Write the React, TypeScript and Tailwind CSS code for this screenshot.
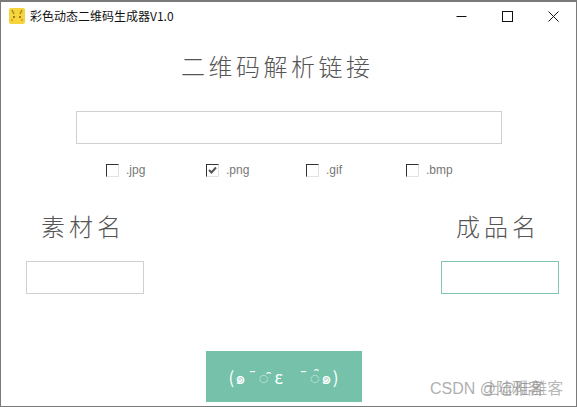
const cjk = { fontFamily: '"Noto Sans CJK SC", sans-serif' };
const mark = { fontFamily: '"Liberation Sans", "Noto Sans CJK SC", sans-serif' };

const formats = [
  { label: '.jpg', checked: false },
  { label: '.png', checked: true },
  { label: '.gif', checked: false },
  { label: '.bmp', checked: false },
];

function FormatCheck({ label, checked }: { label: string; checked: boolean }) {
  return (
    <div className="flex items-center w-[100px] h-[14px]">
      <div className="relative w-[13px] h-[13px] border border-[#e3e3e3] border-t-[#333] border-l-[#333] bg-white">
        {checked && (
          <svg viewBox="0 0 13 13" className="absolute -left-px -top-px w-[13px] h-[13px]">
            <path d="M3 6l2.5 2.5L10 3.5" fill="none" stroke="#555" strokeWidth="2" />
          </svg>
        )}
      </div>
      <span className="ml-[7px] text-[12px] leading-[14px] text-[#777]" style={{ fontFamily: '"Liberation Sans", sans-serif' }}>
        {label}
      </span>
    </div>
  );
}

export default function App() {
  return (
    <div className="relative w-[577px] h-[407px] flex flex-col overflow-hidden bg-white border border-t-2 border-[#7a7a7a]" style={cjk}>
      {/* title bar */}
      <header className="flex items-center h-[28px] shrink-0 pl-[8px]">
        <div className="w-[16px] h-[16px] bg-[#f5d43c] rounded-[2px] flex items-center justify-center">
          <svg viewBox="0 0 16 16" className="w-[16px] h-[16px]">
            <path d="M3 2l2 4M13 2l-2 4" stroke="#a8871c" strokeWidth="1.5" />
            <circle cx="5" cy="9" r="1" fill="#7a5f12" />
            <circle cx="11" cy="9" r="1" fill="#7a5f12" />
            <circle cx="3" cy="12" r="1.2" fill="#e8a02c" />
            <circle cx="13" cy="12" r="1.2" fill="#e8a02c" />
          </svg>
        </div>
        <span className="ml-[5px] text-[12px] leading-[16px] text-[#111]">彩色动态二维码生成器V1.0</span>
        <div className="ml-auto flex items-center mr-[17px] gap-[35px]">
          <svg viewBox="0 0 11 11" className="w-[11px] h-[11px]">
            <path d="M0.5 5.5h10" stroke="#111" strokeWidth="1" />
          </svg>
          <svg viewBox="0 0 11 11" className="w-[11px] h-[11px]">
            <rect x="0.5" y="0.5" width="10" height="10" fill="none" stroke="#111" strokeWidth="1" />
          </svg>
          <svg viewBox="0 0 11 11" className="w-[11px] h-[11px]">
            <path d="M0.5 0.5l10 10M10.5 0.5l-10 10" stroke="#111" strokeWidth="1" />
          </svg>
        </div>
      </header>

      <h1 className="mt-[18px] ml-[180px] h-[36px] text-[24px] leading-[36px] font-light tracking-[3.5px] text-[#555] whitespace-nowrap">
        二维码解析链接
      </h1>

      <div className="mt-[27px] ml-[75px] w-[426px] h-[33px] border border-[#d0d0d0]" />

      <div className="mt-[19px] ml-[105px] flex">
        {formats.map((f) => (
          <FormatCheck key={f.label} label={f.label} checked={f.checked} />
        ))}
      </div>

      <div className="mt-[32px] flex justify-between pl-[40px] pr-[36px] text-[24px] leading-[34px] font-light tracking-[4px] text-[#555]">
        <span>素材名</span>
        <span>成品名</span>
      </div>

      <div className="mt-[18px] flex justify-between pl-[25px] pr-[17px]">
        <div className="w-[118px] h-[33px] border border-[#d0d0d0]" />
        <div className="w-[118px] h-[33px] border border-[#84c4b4]" />
      </div>

      <div className="mt-[57px] ml-[205px] w-[156px] h-[51px] bg-[#75c1a9] flex items-center justify-center text-white text-[17px] tracking-[1px] whitespace-pre">
        (๑¯◌̑ ε   ¯◌̑๑)
      </div>

      {/* watermark, doubled like the picture */}
      <div className="absolute left-[429px] top-[377px] text-[16px] leading-[20px] text-[#8a8a8a]/70 whitespace-nowrap" style={mark}>CSDN @陆雅客</div>
      <div className="absolute left-[482px] top-[377px] text-[16px] leading-[20px] text-[#8a8a8a]/60 whitespace-nowrap" style={mark}>土@陆雅客</div>
    </div>
  );
}
